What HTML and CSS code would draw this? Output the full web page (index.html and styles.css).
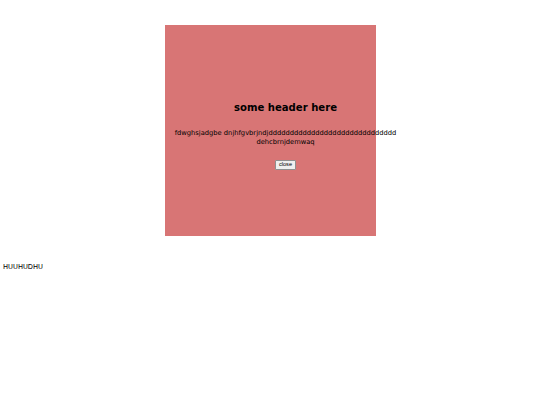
FILE: index.html
```html
<!DOCTYPE html>
<html>
<head>
<meta charset="utf-8">
<link rel="stylesheet" href="styles.css">
</head>
<body>
<div class="modal">
  <div class="modal-content">
    <h2 class="modal-title">some header here</h2>
    <p class="modal-text">fdwghsjadgbe dnjhfgvbrjndjdddddddddddddddddddddddddddddd dehcbrnjdemwaq</p>
    <button class="close-btn">close</button>
  </div>
</div>
<p class="page-text">HUUHUDHU</p>
</body>
</html>
```
FILE: styles.css
```css
html, body {
  background: #ffffff;
}
body {
  margin: 3px;
  font-family: "DejaVu Sans", sans-serif;
  font-size: 6.72px;
  color: #000;
}
.modal {
  margin: 22px 0 0 162px;
  width: 211px;
  height: 211px;
  background: #d87575;
}
.modal-content {
  width: 223px;
  margin-left: 9px;
  padding-top: 77px;
  text-align: center;
}
.modal-title {
  margin: 0;
  font-size: 10.1px;
  line-height: 12px;
  font-weight: bold;
}
.modal-text {
  margin: 15px 0 0;
  line-height: 9px;
}
.close-btn {
  margin-top: 13px;
  font-family: "Liberation Sans", Arial, sans-serif;
  font-size: 5.6px;
  line-height: 7px;
  height: 9.5px;
  padding: 0 2.5px;
  background: #efefef;
  border: 0.5px solid #8f8f8f;
  border-radius: 1px;
  color: #000;
}
.page-text {
  margin: 27px 0 0;
  line-height: 8px;
}
```
